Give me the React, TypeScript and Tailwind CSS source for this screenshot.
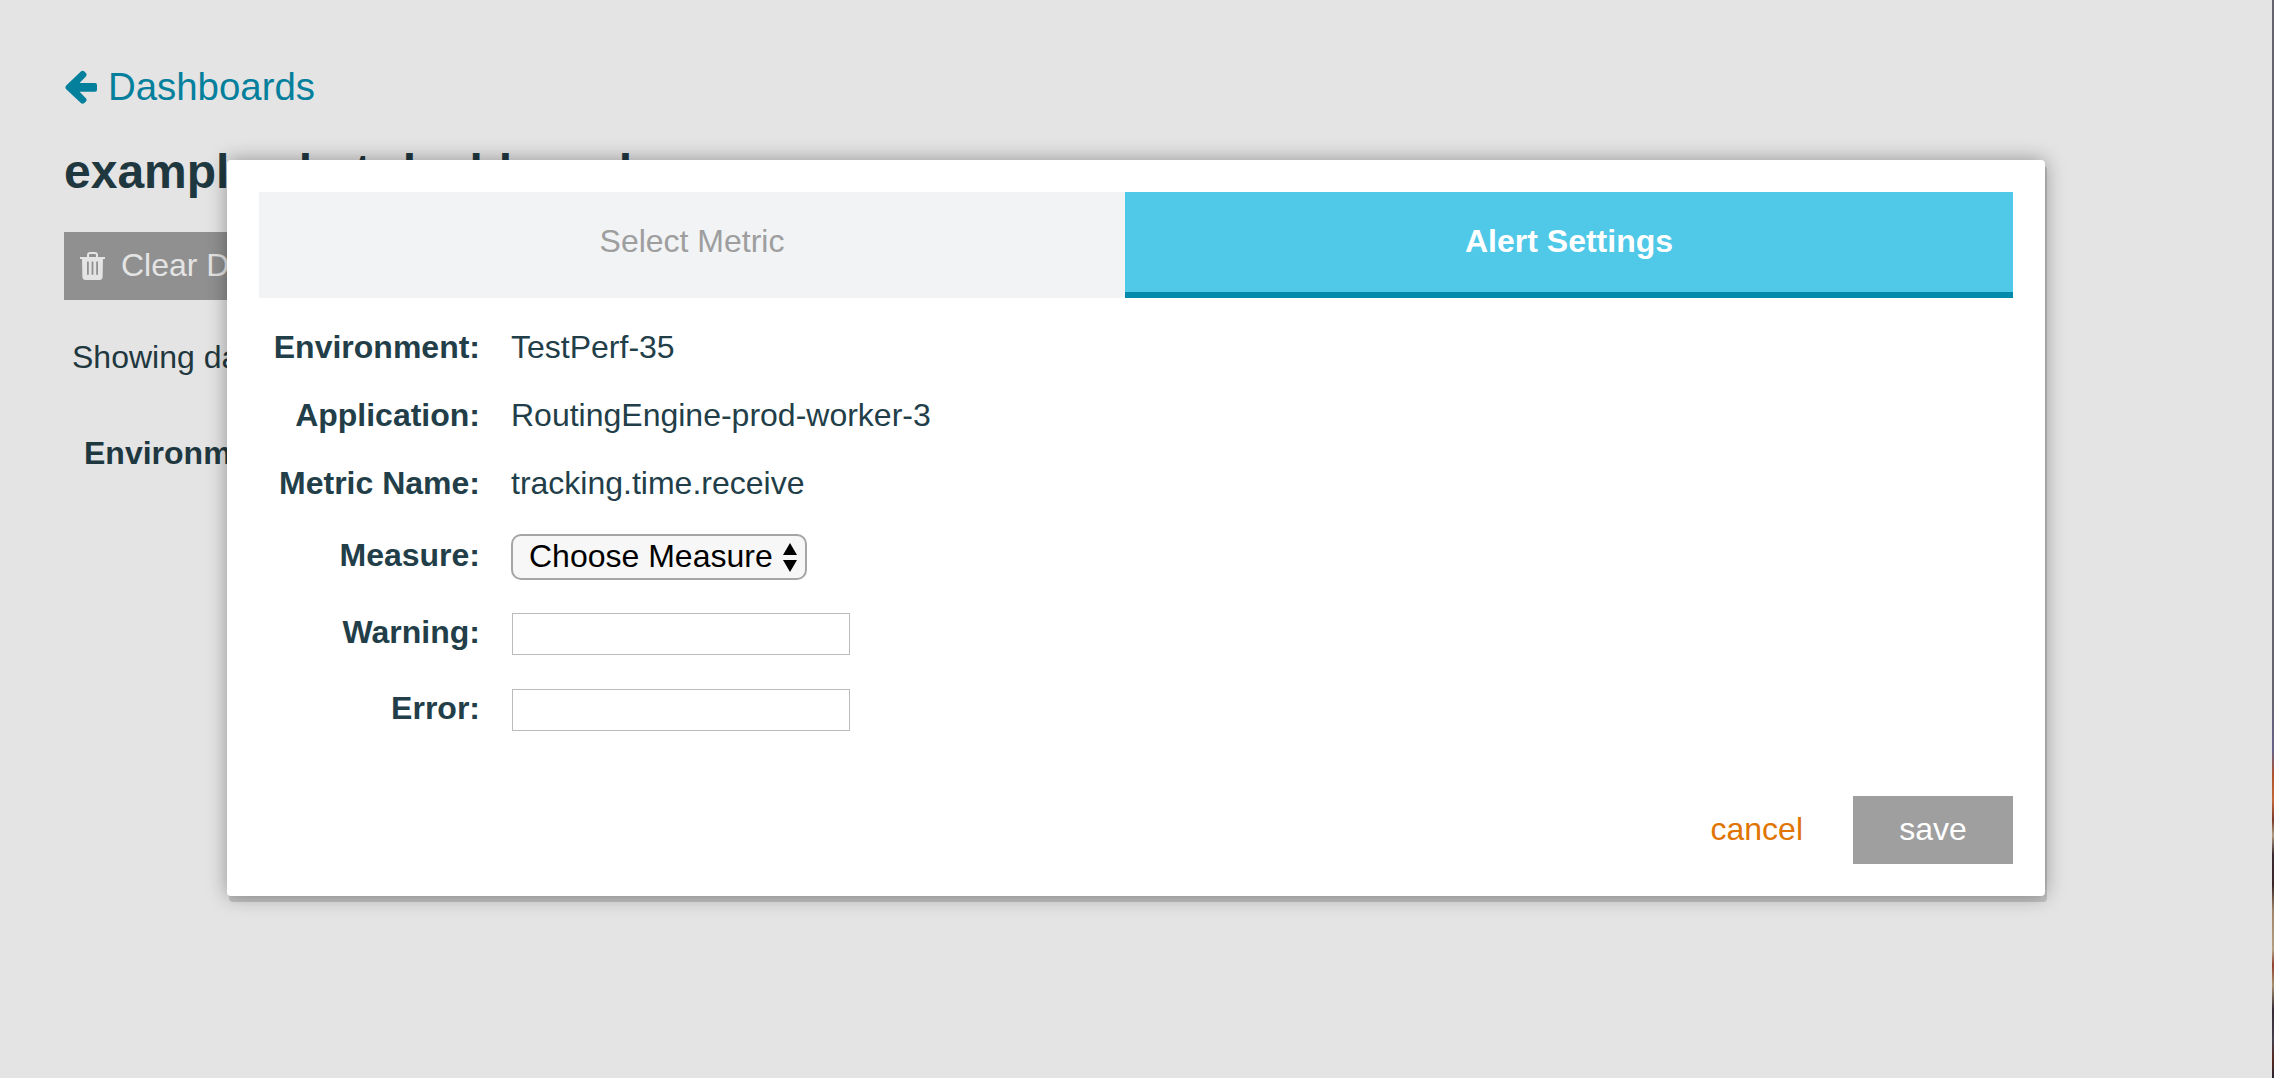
function ArrowLeftIcon() {
  return (
    <svg className="h-[34px] w-[34px] shrink-0" viewBox="0 0 34 34" fill="currentColor">
      <path d="M2.2 15.4 16.6 1.7 Q18.4 0.1 20.4 1.5 L21.9 3 Q23.3 4.7 21.9 6.4 L15.6 13 H31 Q33 13 33 15 V19.8 Q33 21.8 31 21.8 H15.6 L21.9 28.3 Q23.3 30 21.9 31.5 L20.4 33 Q18.4 34.5 16.6 32.8 L2.2 19.2 Q0.6 17.3 2.2 15.4Z" />
    </svg>
  );
}

function TrashIcon() {
  return (
    <svg className="-mt-px block h-[28px] w-[25px] shrink-0" viewBox="0 0 25 28" fill="none">
      <path d="M8 5.2 V3.2 Q8 1 10.2 1 H14.8 Q17 1 17 3.2 V5.2" stroke="#e4e4e4" strokeWidth="2" />
      <path
        fillRule="evenodd"
        fill="#e4e4e4"
        d="M0 5 H25 V7 H23 L22.6 25 Q22.4 28 19.5 28 H5.5 Q2.6 28 2.4 25 L2 7 H0 Z M7 9.5 V22.8 H8.8 V9.5 Z M11.6 9.5 V22.8 H13.4 V9.5 Z M16.2 9.5 V22.8 H18 V9.5 Z"
      />
    </svg>
  );
}

function StaticRow({ label, value }: { label: string; value: string }) {
  return (
    <div className="flex h-[68px] items-center">
      <div className="w-[221px] text-right font-bold">{label}</div>
      <div className="ml-[31px]">{value}</div>
    </div>
  );
}

function InputRow({ label }: { label: string }) {
  return (
    <div className="flex h-[76px] items-center">
      <label className="w-[221px] pb-1 text-right font-bold">{label}</label>
      <input
        aria-label={label}
        className="ml-8 h-[42px] w-[338px] border border-[#bbbbbb] bg-white px-2 outline-none"
      />
    </div>
  );
}

const edgeColors =
  "bg-[linear-gradient(to_bottom,#66616f_0,#66616f_700px,#67628a_750px,#b0522a_775px,#c2683c_800px,#7a3a28_820px,#b09a80_835px,#3a2830_855px,#3a2628_885px,#a08468_910px,#b5a084_950px,#8f4030_965px,#a89070_985px,#352a34_1010px,#45404c_1040px,#5a2820_1060px,#282430_1078px)]";

export default function App() {
  return (
    <div className="relative h-[1078px] w-[2274px] overflow-hidden bg-[#e4e4e4] font-['Liberation_Sans',Arial,sans-serif] text-[32px] leading-[40px] text-[#223e48]">
      <main className="flex flex-col items-start whitespace-nowrap pl-16 pt-16 text-[#1f383f]">
        <a className="flex h-[46px] items-center gap-[10px] text-[38.4px] text-[#04809d]">
          <ArrowLeftIcon />
          Dashboards
        </a>
        <h1 className="mt-[35px] h-[55px] text-[48px] leading-[54px] font-bold">example-chat-dashboard</h1>
        <button className="mt-8 flex h-[68px] w-[300px] items-center gap-4 bg-[#909090] pl-4 text-[#e4e4e4]">
          <TrashIcon />
          <span className="-mt-0.5">Clear Data</span>
        </button>
        <p className="mt-[37px] ml-2">Showing data</p>
        <p className="mt-14 ml-5 font-bold">Environment</p>
      </main>

      <section className="absolute left-[227px] top-[160px] flex h-[736px] w-[1818px] flex-col rounded-[4px] bg-white px-8 pt-8 shadow-[2px_6px_0_0_rgba(0,0,0,0.14),0_0_20px_rgba(0,0,0,0.36)]">
        <div className="flex h-[106px] text-center">
          <div className="w-[866px] bg-[#f1f3f5] pt-[29px] text-[#9e9e9e]">Select Metric</div>
          <div className="flex-1 border-b-[6px] border-[#048bab] bg-[#50c8e8] pt-[29px] font-bold text-white">
            Alert Settings
          </div>
        </div>
        <div className="mt-[15px]">
          <StaticRow label="Environment:" value="TestPerf-35" />
          <StaticRow label="Application:" value="RoutingEngine-prod-worker-3" />
          <StaticRow label="Metric Name:" value="tracking.time.receive" />
          <div className="mt-[3px] flex h-[76px] items-center">
            <div className="w-[221px] pb-1.5 text-right font-bold">Measure:</div>
            <button className="-mt-0.5 ml-[31px] flex h-[46px] w-[296px] items-center rounded-[10px] border-2 border-[#a5a5a5] bg-[#f7f7f7] pl-4 text-black">
              <span className="-mt-0.5">Choose Measure</span>
              <svg className="ml-[10px] h-[29px] w-[14px]" viewBox="0 0 14 29">
                <path d="M7 0 14 12H0Z M0 17H14L7 29Z" />
              </svg>
            </button>
          </div>
          <InputRow label="Warning:" />
          <InputRow label="Error:" />
        </div>
        <div className="mt-12 flex h-[68px] items-center justify-end gap-[50px]">
          <a className="pb-0.5 text-[#e07400]">cancel</a>
          <button className="h-[68px] w-[160px] bg-[#9f9f9f] pb-0.5 text-white">save</button>
        </div>
      </section>

      <div className={`absolute right-0 top-0 h-full w-[2px] ${edgeColors}`} />
    </div>
  );
}
